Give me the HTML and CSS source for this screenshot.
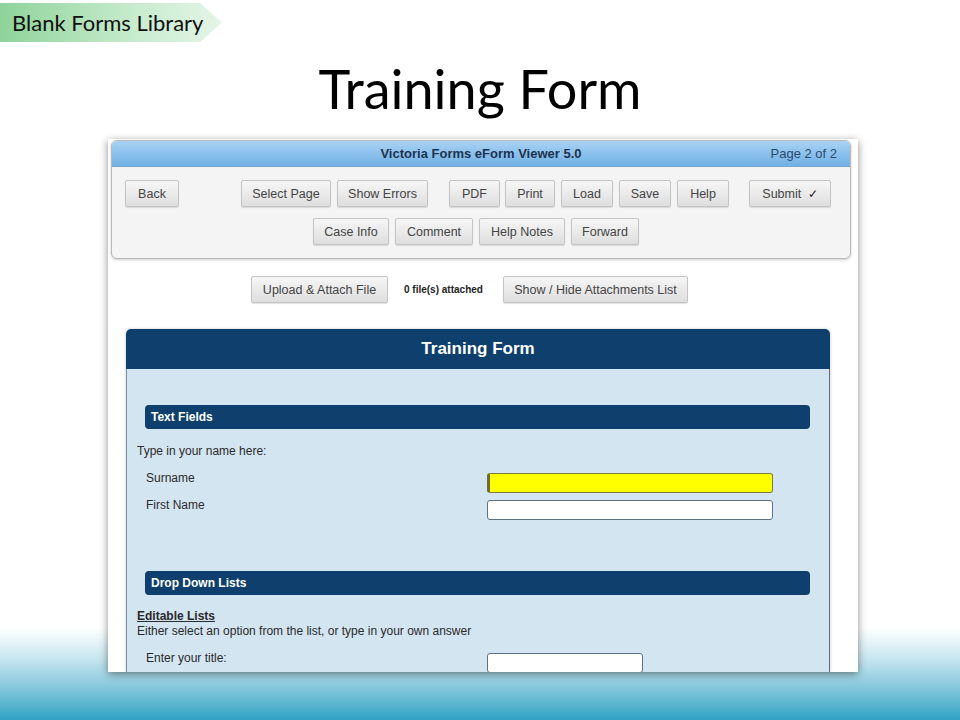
FILE: index.html
```html
<!DOCTYPE html>
<html lang="en">

<head>
    <meta charset="UTF-8">
    <title>Training Form</title>
    <link rel="stylesheet" href="styles.css">
</head>

<body>

    <div class="slide">
        <div class="tag">Blank Forms Library</div>
        <h1 class="slide-title">Training Form</h1>

        <div class="shot">
            <div class="toolbar">
                <div class="toolbar-head">
                    <span class="viewer-name">Victoria Forms eForm Viewer 5.0</span>
                    <span class="page-count">Page 2 of 2</span>
                </div>
                <div class="btn-row row-1">
                    <button class="btn btn-back">Back</button>
                    <button class="btn">Select Page</button>
                    <button class="btn">Show Errors</button>
                    <button class="btn gap-l">PDF</button>
                    <button class="btn">Print</button>
                    <button class="btn">Load</button>
                    <button class="btn">Save</button>
                    <button class="btn">Help</button>
                    <button class="btn btn-submit">Submit <span class="tick">&#10003;</span></button>
                </div>
                <div class="btn-row row-2">
                    <button class="btn">Case Info</button>
                    <button class="btn">Comment</button>
                    <button class="btn">Help Notes</button>
                    <button class="btn">Forward</button>
                </div>
            </div>

            <div class="attach-row">
                <button class="btn btn-upload">Upload &amp; Attach File</button>
                <span class="attach-count">0 file(s) attached</span>
                <button class="btn btn-list">Show / Hide Attachments List</button>
            </div>

            <div class="form">
                <div class="form-head">Training Form</div>
                <div class="form-body">
                    <div class="section-bar">Text Fields</div>
                    <p class="intro">Type in your name here:</p>
                    <div class="field">
                        <label for="surname">Surname</label>
                        <input type="text" id="surname" class="input focused">
                    </div>
                    <div class="field">
                        <label for="firstname">First Name</label>
                        <input type="text" id="firstname" class="input">
                    </div>

                    <div class="section-bar bar-2">Drop Down Lists</div>
                    <p class="sub-title">Editable Lists</p>
                    <p class="sub-text">Either select an option from the list, or type in your own answer</p>
                    <div class="field">
                        <label for="title">Enter your title:</label>
                        <input type="text" id="title" class="input short">
                    </div>
                </div>
            </div>
        </div>
    </div>

</body>

</html>
```

FILE: styles.css
```css
body {
    margin: 0;
    width: 960px;
    height: 720px;
    overflow: hidden;
    background: linear-gradient(to bottom, #ffffff 0px, #ffffff 628px, #c4e4ee 660px, #74bfd6 695px, #2ea2c3 720px);
}

.slide {
    display: flex;
    flex-direction: column;
    height: 720px;
}

.tag {
    align-self: flex-start;
    margin-top: 3px;
    height: 39px;
    line-height: 39px;
    width: 210px;
    padding-left: 12px;
    font-family: Lato, "Open Sans", sans-serif;
    font-size: 22px;
    color: #111;
    background: linear-gradient(to right, #8ed39a, #c7ebcd 60%, #e4f5e7);
    clip-path: polygon(0 0, 200px 0, 222px 50%, 200px 100%, 0 100%);
}

.slide-title {
    margin: 18px 0 0;
    height: 58px;
    line-height: 58px;
    text-align: center;
    font-family: Lato, "Open Sans", sans-serif;
    font-weight: normal;
    font-size: 54px;
    color: #000;
}

.shot {
    margin: 21px 0 0 108px;
    width: 750px;
    height: 533px;
    overflow: hidden;
    background: #fff;
    box-shadow: 0 2px 8px rgba(0, 0, 0, 0.45);
    font-family: "Liberation Sans", Arial, sans-serif;
    display: flex;
    flex-direction: column;
}

.toolbar {
    margin: 1px 7px 0 3px;
    height: 117px;
    border: 1px solid #b9b9b9;
    border-radius: 6px;
    background: #f4f4f4;
    box-shadow: 0 1px 3px rgba(0, 0, 0, 0.2);
    overflow: hidden;
}

.toolbar-head {
    height: 25px;
    display: flex;
    align-items: center;
    justify-content: center;
    position: relative;
    background: linear-gradient(to bottom, #a9d2f3, #6fb0e6);
    border-bottom: 1px solid #7aa6cb;
    font-size: 13px;
    color: #1c3350;
}

.viewer-name {
    font-weight: bold;
}

.page-count {
    position: absolute;
    right: 13px;
    top: 5px;
    color: #2c4a6a;
}

.btn-row {
    display: flex;
}

.row-1 {
    margin-top: 13px;
    padding-left: 13px;
}

.row-2 {
    margin-top: 11px;
    padding-left: 201px;
}

.btn {
    flex-shrink: 0;
    white-space: nowrap;
    height: 27px;
    padding: 0 9px;
    margin-right: 6px;
    border: 1px solid #c4c4c4;
    border-radius: 2px;
    background: linear-gradient(to bottom, #f6f6f6, #dedede);
    font-family: "Liberation Sans", Arial, sans-serif;
    font-size: 12.5px;
    color: #444;
    box-shadow: 0 1px 1px rgba(0, 0, 0, 0.12);
}

.btn-back {
    width: 54px;
    margin-right: 62px;
}

.row-1 .btn:nth-child(2) {
    width: 90px;
}

.row-1 .btn:nth-child(3) {
    width: 91px;
    margin-right: 21px;
}

.row-1 .gap-l {
    width: 51px;
    margin-right: 5px;
}

.row-1 .btn:nth-child(5) {
    width: 50px;
}

.row-1 .btn:nth-child(6),
.row-1 .btn:nth-child(7),
.row-1 .btn:nth-child(8) {
    width: 52px;
}

.btn-submit {
    margin-left: 14px;
    width: 82px;
}

.row-2 .btn:nth-child(1) {
    width: 76px;
}

.row-2 .btn:nth-child(2) {
    width: 78px;
}

.row-2 .btn:nth-child(3) {
    width: 86px;
}

.row-2 .btn:nth-child(4) {
    width: 68px;
}

.tick {
    font-size: 12px;
    color: #222;
    margin-left: 3px;
}

.attach-row {
    display: flex;
    align-items: center;
    margin: 17px 0 0 143px;
    height: 27px;
}

.btn-upload {
    width: 137px;
    margin-right: 0;
}

.btn-list {
    width: 185px;
}

.attach-count {
    width: 99px;
    box-sizing: border-box;
    padding-left: 16px;
    font-size: 10px;
    font-weight: bold;
    color: #222;
    white-space: nowrap;
    margin-right: 16px;
}

.form {
    margin: 26px 0 0 18px;
    width: 704px;
    flex: 1;
    border-radius: 5px 5px 0 0;
    overflow: hidden;
    box-shadow: 0 0 3px rgba(0, 0, 0, 0.25);
    display: flex;
    flex-direction: column;
}

.form-head {
    height: 40px;
    line-height: 40px;
    background: #0e3f6d;
    color: #fff;
    text-align: center;
    font-weight: bold;
    font-size: 17px;
}

.form-body {
    flex: 1;
    background: #d4e5f2;
    border-right: 1px solid #5b6d80;
    border-left: 1px solid #7f8fa0;
    padding: 36px 19px 0 10px;
    font-size: 12px;
    color: #2a2a2a;
}

.section-bar {
    margin-left: 8px;
    height: 24px;
    line-height: 24px;
    padding-left: 6px;
    border-radius: 4px;
    background: #0e3f6d;
    color: #fff;
    font-weight: bold;
    font-size: 12px;
}

.intro {
    margin: 15px 0 13px;
}

.field {
    display: flex;
    align-items: flex-start;
    height: 27px;
}

.field label {
    width: 341px;
    padding-left: 9px;
}

.input {
    width: 286px;
    height: 20px;
    box-sizing: border-box;
    margin: 2px 0 0;
    border: 1px solid #5c7184;
    border-radius: 3px;
    background: #fff;
    padding: 0;
}

.focused {
    background: #ffff00;
    border-color: #7c7c3a;
    border-left: 3px solid #6d6d2f;
}

.bar-2 {
    margin-top: 46px;
}

.sub-title {
    margin: 14px 0 0;
    font-weight: bold;
    text-decoration: underline;
}

.sub-text {
    margin: 1px 0 13px;
}

.short {
    width: 156px;
}
```
